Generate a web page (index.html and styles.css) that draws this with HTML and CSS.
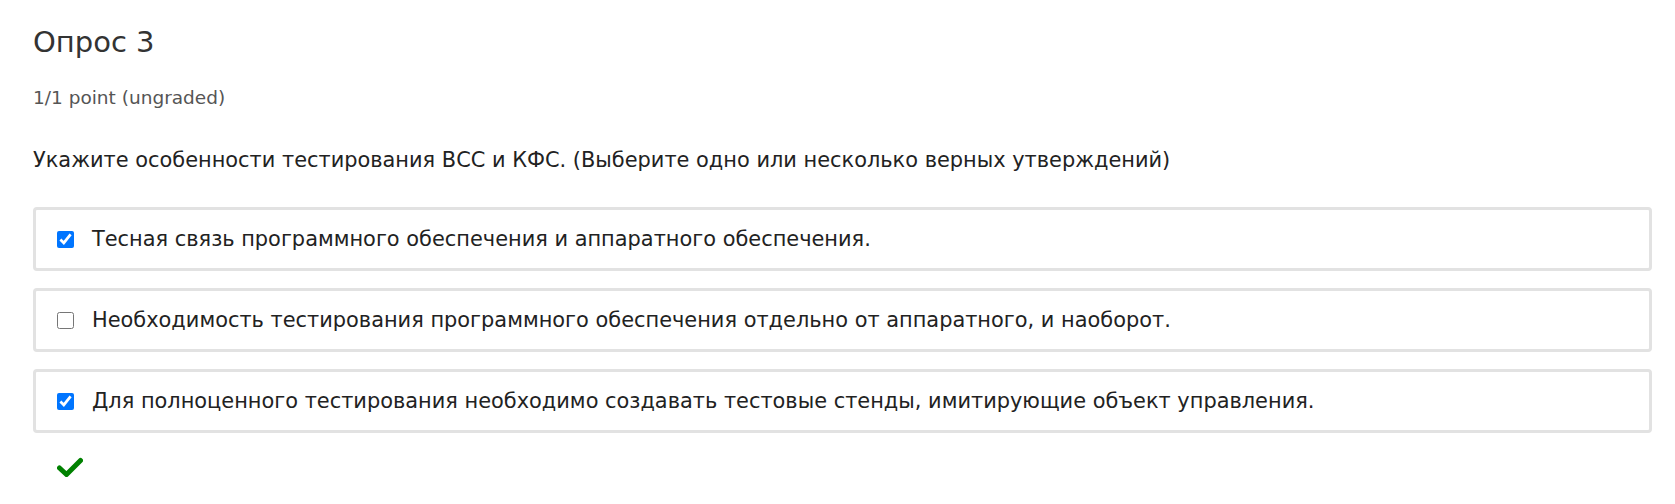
FILE: index.html
```html
<!DOCTYPE html>
<html lang="ru">
<head>
<meta charset="utf-8">
<link rel="stylesheet" href="styles.css">
</head>
<body>
<div class="problem">
  <h3 class="title">Опрос 3</h3>
  <div class="points">1/1 point (ungraded)</div>
  <p class="question">Укажите особенности тестирования ВСС и КФС. (Выберите одно или несколько верных утверждений)</p>
  <div class="choices">
    <label class="choice"><input type="checkbox" checked><span>Тесная связь программного обеспечения и аппаратного обеспечения.</span></label>
    <label class="choice"><input type="checkbox"><span>Необходимость тестирования программного обеспечения отдельно от аппаратного, и наоборот.</span></label>
    <label class="choice"><input type="checkbox" checked><span>Для полноценного тестирования необходимо создавать тестовые стенды, имитирующие объект управления.</span></label>
  </div>
  <div class="status">
    <svg class="ok" viewBox="0 0 26 20" width="26" height="20"><path d="M2.5 11 L9.5 17.5 L23.5 3.5" fill="none" stroke="#008100" stroke-width="5" stroke-linejoin="round" stroke-linecap="round"/></svg>
  </div>
</div>
</body>
</html>
```
FILE: styles.css
```css
html, body {
  margin: 0;
  padding: 0;
  background: #ffffff;
}
body {
  font-family: "DejaVu Sans", "Noto Sans", sans-serif;
  color: #313131;
}
.problem {
  padding: 22px 23px 0 33px;
}
.title {
  margin: 0;
  font-size: 29px;
  font-weight: 400;
  line-height: 40px;
  color: #333;
}
.points {
  margin-top: 24px;
  font-size: 18.5px;
  line-height: 24px;
  color: #555;
}
.question {
  margin: 35px 0 0 0;
  font-size: 20.9px;
  line-height: 30px;
  color: #222;
}
.choices {
  margin-top: 32px;
  display: flex;
  flex-direction: column;
  gap: 17px;
}
.choice {
  display: flex;
  align-items: center;
  height: 58px;
  border: 3px solid #e2e2e2;
  border-radius: 4px;
  padding: 0 0 0 21px;
  font-size: 20.9px;
  color: #222;
}
.choice input {
  width: 17px;
  height: 17px;
  margin: 0 18px 0 0;
}
.status {
  margin: 24px 0 0 24px;
}
.ok {
  display: block;
}
```
